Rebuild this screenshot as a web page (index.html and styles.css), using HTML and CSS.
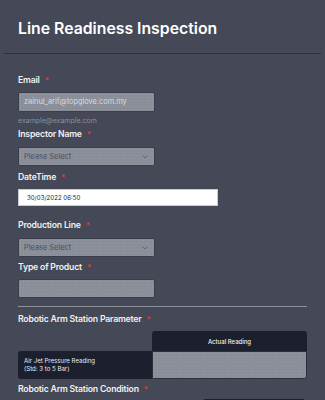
FILE: index.html
```html
<!DOCTYPE html>
<html>
<head>
<meta charset="utf-8">
<link rel="stylesheet" href="styles.css">
</head>
<body>
<div class="page">
  <header class="header">
    <h1 class="title">Line Readiness Inspection</h1>
  </header>
  <form class="form">
    <div class="field f-email">
      <label class="label">Email <span class="req">*</span></label>
      <div class="input input-filled">zainul_arif@topglove.com.my</div>
      <div class="sublabel">example@example.com</div>
    </div>
    <div class="field f-inspector">
      <label class="label">Inspector Name <span class="req">*</span></label>
      <div class="input select">Please Select
        <svg class="chev" width="6" height="4" viewBox="0 0 6 4"><path d="M0.5 0.5 L3 3 L5.5 0.5" fill="none" stroke="#5b5f6b" stroke-width="0.9"/></svg>
      </div>
    </div>
    <div class="field f-date">
      <label class="label">DateTime <span class="req">*</span></label>
      <div class="date">30/03/2022 06:50</div>
    </div>
    <div class="field f-line">
      <label class="label">Production Line <span class="req">*</span></label>
      <div class="input select">Please Select
        <svg class="chev" width="6" height="4" viewBox="0 0 6 4"><path d="M0.5 0.5 L3 3 L5.5 0.5" fill="none" stroke="#5b5f6b" stroke-width="0.9"/></svg>
      </div>
    </div>
    <div class="field f-product">
      <label class="label">Type of Product <span class="req">*</span></label>
      <div class="input"></div>
    </div>
    <hr class="divider">
    <div class="field f-param">
      <label class="label">Robotic Arm Station Parameter <span class="req">*</span></label>
      <div class="matrix">
        <div class="m-corner"></div>
        <div class="m-head">Actual Reading</div>
        <div class="m-row">Air Jet Pressure Reading<br>(Std: 3 to 5 Bar)</div>
        <div class="m-cell"></div>
      </div>
    </div>
    <div class="field f-cond">
      <label class="label">Robotic Arm Station Condition <span class="req">*</span></label>
      <div class="cond-row"><div class="cond-dark"></div></div>
    </div>
  </form>
</div>
</body>
</html>
```
FILE: styles.css
```css
* { box-sizing: border-box; }
html, body { margin: 0; padding: 0; }
body {
  background: #444857;
  font-family: Inter, "Noto Sans", sans-serif;
  color: #f2f3f5;
  overflow: hidden;
}
.page { width: 325px; height: 400px; }
.header {
  margin: 0 4px;
  padding: 17px 14px 12px;
  border-bottom: 1px solid #2e313c;
}
.title {
  margin: 0;
  font-size: 15.8px;
  line-height: 24px;
  font-weight: 600;
  color: #ffffff;
}
.form { padding: 18px 18px 0; }
.field { display: flex; flex-direction: column; align-items: flex-start; }
.label {
  font-size: 8.7px;
  line-height: 16px;
  font-weight: 600;
  letter-spacing: -0.2px;
  color: #eef0f3;
  display: flex;
  align-items: center;
}
.req { color: #e0393e; font-size: 8px; margin-left: 5px; }
.input {
  width: 137px;
  height: 19px;
  margin-top: 4px;
  background-color: #8a8e99;
  background-image: radial-gradient(circle, rgba(255,255,255,0.08) 0.5px, transparent 0.8px);
  background-size: 3px 3px;
  border: 1px solid #3a3e4b;
  border-radius: 2px;
  font-size: 7.4px;
  line-height: 17px;
  padding: 0 5px;
  position: relative;
}
.input-filled { height: 20px; line-height: 18px; color: #d9dbdf; }
.select { color: #4a4e5b; }
.chev { position: absolute; right: 6px; top: 7px; }
.sublabel {
  font-size: 7px;
  line-height: 10px;
  margin-top: 4px;
  color: #8b8f9a;
}
.f-inspector .select { margin-top: 5px; height: 19px; }
.f-date { margin-top: 3px; }
.date {
  margin-top: 4px;
  width: 200px;
  height: 17px;
  background: #ffffff;
  border: 1px solid #c9cbd1;
  color: #1a1a1a;
  font-size: 6.1px;
  line-height: 15px;
  padding: 0 8px;
}
.f-line { margin-top: 11px; }
.f-line .select { margin-top: 5px; }
.f-product { margin-top: 2px; }
.divider {
  margin: 8px 0 0;
  border: 0;
  border-top: 1px solid #8f939d;
  width: 289px;
}
.f-param { margin-top: 4px; }
.matrix {
  margin-top: 4px;
  display: grid;
  grid-template-columns: 134px 155px;
  grid-template-rows: 20px 28px;
  width: 289px;
}
.m-head {
  background: #1c1f2d;
  border-radius: 3px 3px 0 0;
  color: #f0f1f3;
  font-size: 6px;
  font-weight: 500;
  display: flex;
  align-items: center;
  justify-content: center;
}
.m-row {
  background: #1c1f2d;
  border-radius: 3px 0 0 3px;
  color: #e8e9ec;
  font-size: 6.1px;
  line-height: 8px;
  padding: 6px 6px 0;
}
.m-cell {
  background-color: #8a8e99;
  background-image: radial-gradient(circle, rgba(255,255,255,0.08) 0.5px, transparent 0.8px);
  background-size: 3px 3px;
  border: 1px solid #2c2f3c;
  border-radius: 0 0 3px 0;
}
.f-cond { margin-top: 2px; }
.cond-row { width: 289px; display: flex; justify-content: flex-end; padding-right: 2px; }
.cond-dark { width: 102px; height: 4px; margin-top: 2px; background: #1c1f2d; border-radius: 3px 3px 0 0; }
```
